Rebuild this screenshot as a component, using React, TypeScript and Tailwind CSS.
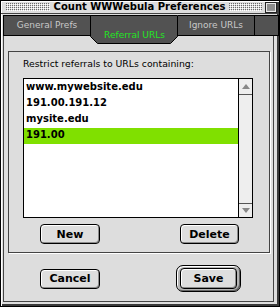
const Grip = ({ w, id }: { w: number; id: string }) => (
  <svg width={w} height={8} className="block">
    <defs>
      <pattern id={id} width="2" height="2" patternUnits="userSpaceOnUse">
        <rect x="0" y="0" width="1" height="1" fill="#6a6a6a" />
        <rect x="1" y="1" width="1" height="1" fill="#ffffff" />
      </pattern>
    </defs>
    <rect width={w} height={8} fill={`url(#${id})`} />
  </svg>
)

const CollapseBox = () => (
  <svg width={12} height={11} className="block">
    <rect x="0.5" y="0.5" width="11" height="10" fill="#e8e8e8" stroke="#222" />
    <rect x="2" y="2.5" width="8" height="1" fill="#333" />
    <rect x="2" y="4.5" width="8" height="1" fill="#333" />
    <rect x="2" y="6.5" width="8" height="1" fill="#333" />
    <rect x="2" y="8" width="8" height="1" fill="#999" />
  </svg>
)

const Arrow = ({ up }: { up?: boolean }) => (
  <svg width={8} height={5} className="block">
    <polygon points={up ? '0,5 4,0 8,5' : '0,0 4,5 8,0'} fill="#888" />
  </svg>
)

const Button = ({ label, className }: { label: string; className: string }) => (
  <div
    className={`flex items-center justify-center rounded-[4px] border border-black bg-[#dedede] text-[11px] font-bold leading-none text-black shadow-[inset_1px_1px_0_#fff,inset_-1px_-1px_0_#8c8c8c] ${className}`}
  >
    {label}
  </div>
)

const urls = ['www.mywebsite.edu', '191.00.191.12', 'mysite.edu', '191.00']

export default function App() {
  return (
    <div className="flex h-[307px] w-[280px] flex-col border border-black bg-[#dddddd] font-['DejaVu_Sans',sans-serif] text-black shadow-[inset_1px_1px_0_#fff,inset_-2px_-2px_0_#3a3a3a]">
      {/* title bar */}
      <div className="flex h-[13px] items-center border-b border-[#444] pl-[5px] pr-[2px]">
        <Grip w={44} id="gl" />
        <div className="mx-[3px] flex-1 text-center text-[10px] font-bold leading-none">
          Count WWWebula Preferences
        </div>
        <Grip w={33} id="gr" />
        <div className="ml-[3px]">
          <CollapseBox />
        </div>
      </div>

      {/* tabs */}
      <div className="relative z-10 ml-[2px] mt-[1px] flex h-[21px] text-[9px] leading-none">
        <div className="flex w-[88px] items-center justify-center border border-black bg-[#525252] text-[#c8c8c8]">
          General Prefs
        </div>
        <div className="relative w-[87px]">
          <svg width={88} height={29} className="absolute left-[-1px] top-0 block">
            <polygon
              points="0.5,0.5 0.5,21.5 7.5,28.5 80.5,28.5 87.5,21.5 87.5,0.5"
              fill="#525252"
              stroke="#000"
            />
          </svg>
          <div className="absolute inset-x-0 top-[14px] text-center leading-[12px] text-[#22e622]">
            Referral URLs
          </div>
        </div>
        <div className="flex w-[77px] items-center justify-center border-y border-r border-black bg-[#525252] text-[#c8c8c8]">
          Ignore URLs
        </div>
        <div className="flex-1 border-y border-r border-black bg-[#525252]" />
      </div>

      {/* body */}
      <div className="mb-[4px] ml-[2px] mr-[5px] flex flex-1 flex-col border-x border-b border-[#444]">
        <div className="ml-[4px] mr-[3px] mt-[15px] flex h-[202px] flex-col border border-[#444] pl-[14px] pt-[6px] shadow-[1px_1px_0_#fff]">
          <div className="h-[12px] text-[9.3px] leading-[12px]">Restrict referrals to URLs containing:</div>

          <div className="mt-[8px] flex h-[140px] w-[230px] border border-black bg-white">
            <div className="flex-1 pt-[1px]">
              {urls.map((u, i) => (
                <div
                  key={u}
                  className={`h-[16px] pl-[2px] text-[10px] font-bold leading-[13px] ${i === 3 ? 'bg-[#80e000]' : ''}`}
                >
                  {u}
                </div>
              ))}
            </div>
            <div className="flex w-[14px] flex-col border-l border-black bg-[#eeeeee]">
              <div className="flex h-[16px] items-center justify-center border-b border-[#555]">
                <Arrow up />
              </div>
              <div className="flex-1" />
              <div className="flex h-[14px] items-center justify-center border-t border-[#555]">
                <Arrow />
              </div>
            </div>
          </div>

          <div className="mt-[6px] flex h-[20px]">
            <Button label="New" className="ml-[17px] w-[60px]" />
            <Button label="Delete" className="ml-[80px] w-[59px]" />
          </div>
        </div>

        <div className="mt-[12px] flex h-[27px] items-center">
          <Button label="Cancel" className="ml-[36px] h-[20px] w-[60px]" />
          <div className="ml-[76px] flex h-[27px] w-[65px] rounded-[7px] border border-black bg-[#b4b4b4] px-[3px] py-[2px] shadow-[inset_1px_1px_0_#fff,inset_-1px_-1px_0_#666]">
            <Button label="Save" className="h-full w-full" />
          </div>
        </div>
      </div>
    </div>
  )
}
